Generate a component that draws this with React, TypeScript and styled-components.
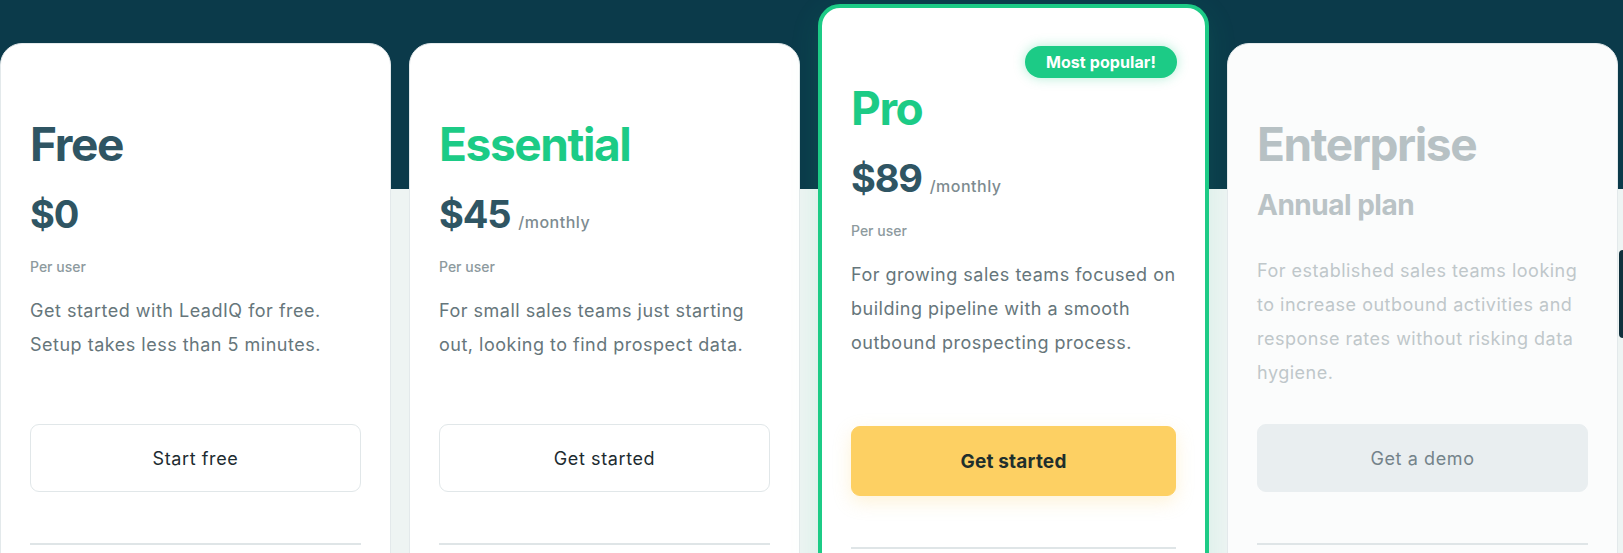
import styled, { createGlobalStyle } from "styled-components";

type Variant = "default" | "featured" | "muted";

interface IPlan {
  name: string;
  price?: string;
  period?: string;
  perUser?: boolean;
  subtitle?: string;
  description: string;
  cta: string;
  variant: Variant;
  accent?: boolean;
  badge?: string;
}

const plans: IPlan[] = [
  {
    name: "Free",
    price: "$0",
    perUser: true,
    description: "Get started with LeadIQ for free. Setup takes less than 5 minutes.",
    cta: "Start free",
    variant: "default",
  },
  {
    name: "Essential",
    price: "$45",
    period: "/monthly",
    perUser: true,
    description: "For small sales teams just starting out, looking to find prospect data.",
    cta: "Get started",
    variant: "default",
    accent: true,
  },
  {
    name: "Pro",
    price: "$89",
    period: "/monthly",
    perUser: true,
    description:
      "For growing sales teams focused on building pipeline with a smooth outbound prospecting process.",
    cta: "Get started",
    variant: "featured",
    accent: true,
    badge: "Most popular!",
  },
  {
    name: "Enterprise",
    subtitle: "Annual plan",
    description:
      "For established sales teams looking to increase outbound activities and response rates without risking data hygiene.",
    cta: "Get a demo",
    variant: "muted",
  },
];

const GREEN = "#1ccb86";
const NAVY = "#0b3a4a";
const SLATE = "#2f5563";

const GlobalStyle = createGlobalStyle`
  html, body {
    margin: 0;
    padding: 0;
    overflow: hidden;
  }
  body {
    font-family: Inter, "Liberation Sans", sans-serif;
    background: #eef4f3;
  }
`;

export default function App() {
  return (
    <>
      <GlobalStyle />
      <Page>
        <CardRow>
          {plans.map((plan) => (
            <PlanCard key={plan.name} plan={plan} />
          ))}
        </CardRow>
        <SideTab />
      </Page>
    </>
  );
}

const PlanCard = ({ plan }: { plan: IPlan }) => {
  const { variant } = plan;
  return (
    <Card $variant={variant}>
      {plan.badge ? <Badge>{plan.badge}</Badge> : null}
      <Header $variant={variant}>
        <Title $variant={variant} $accent={!!plan.accent}>
          {plan.name}
        </Title>

        {/* enterprise has no price, only a subtitle */}
        {plan.subtitle ? <Subtitle>{plan.subtitle}</Subtitle> : null}
        {plan.price ? (
          <PriceRow>
            <Price>{plan.price}</Price>
            {plan.period ? <Period>{plan.period}</Period> : null}
          </PriceRow>
        ) : null}
        {plan.perUser ? <PerUser>Per user</PerUser> : null}

        <Description $variant={variant} $spaced={!!plan.subtitle}>
          {plan.description}
        </Description>
      </Header>
      <CtaButton $variant={variant}>{plan.cta}</CtaButton>
      <Divider />
    </Card>
  );
};

const Page = styled.div`
  position: relative;
  height: 553px;
  overflow: hidden;
  box-sizing: border-box;
  padding-top: 4px;
  background: linear-gradient(${NAVY} 0 189px, #eef4f3 189px 100%);
`;

const CardRow = styled.div`
  display: flex;
  align-items: flex-start;
  gap: 18px;
`;

const Card = styled.div<{ $variant: Variant }>`
  flex: 0 0 391px;
  box-sizing: border-box;
  display: flex;
  flex-direction: column;
  border-radius: 22px;
  background: ${(p) => (p.$variant === "muted" ? "#fbfcfc" : "#fff")};
  border: ${(p) =>
    p.$variant === "featured" ? `4px solid ${GREEN}` : "1px solid #e3e9eb"};
  margin-top: ${(p) => (p.$variant === "featured" ? 0 : 39)}px;
  padding: ${(p) => (p.$variant === "featured" ? "38px 29px 80px" : "77px 29px 80px")};
  box-shadow: ${(p) =>
    p.$variant === "featured" ? "0 8px 30px rgba(28, 203, 134, 0.12)" : "none"};
`;

const Badge = styled.div`
  align-self: flex-end;
  height: 32px;
  padding: 0 21px;
  margin-right: -1px;
  margin-bottom: 7px;
  border-radius: 16px;
  display: flex;
  align-items: center;
  background: ${GREEN};
  color: #fff;
  font-size: 16px;
  font-weight: 700;
  letter-spacing: 0.1px;
  box-shadow: 0 0 12px rgba(28, 203, 134, 0.35);
`;

const Header = styled.div<{ $variant: Variant }>`
  display: flex;
  flex-direction: column;
  align-items: flex-start;
  height: ${(p) => (p.$variant === "featured" ? 341 : 303)}px;
`;

const Title = styled.h2<{ $variant: Variant; $accent: boolean }>`
  margin: 0;
  font-size: 46px;
  line-height: 46px;
  font-weight: 700;
  letter-spacing: -1.4px;
  color: ${(p) =>
    p.$variant === "muted" ? "#b7c1c4" : p.$accent ? GREEN : SLATE};
`;

const Subtitle = styled.div`
  margin-top: 24px;
  font-size: 28px;
  line-height: 28px;
  font-weight: 700;
  letter-spacing: -0.5px;
  color: #bac3c6;
`;

const PriceRow = styled.div`
  margin-top: 28px;
  display: flex;
  align-items: baseline;
`;

const Price = styled.span`
  font-size: 38px;
  line-height: 38px;
  font-weight: 700;
  letter-spacing: -1.2px;
  color: ${SLATE};
`;

const Period = styled.span`
  margin-left: 8px;
  font-size: 16px;
  font-weight: 500;
  letter-spacing: 0.5px;
  color: #7d8b90;
`;

const PerUser = styled.div`
  margin-top: 27px;
  font-size: 14px;
  line-height: 14px;
  font-weight: 500;
  color: #8d9a9e;
`;

const Description = styled.p<{ $variant: Variant; $spaced: boolean }>`
  margin: ${(p) => (p.$spaced ? 35 : 20)}px 0 0;
  font-size: 18px;
  line-height: 34px;
  letter-spacing: 0.5px;
  color: ${(p) => (p.$variant === "muted" ? "#bfc7ca" : "#66767b")};
`;

const CtaButton = styled.button<{ $variant: Variant }>`
  height: ${(p) => (p.$variant === "featured" ? 70 : 68)}px;
  width: 100%;
  border-radius: 9px;
  font-family: inherit;
  font-size: ${(p) => (p.$variant === "featured" ? 19 : 18)}px;
  font-weight: ${(p) => (p.$variant === "featured" ? 700 : 400)};
  letter-spacing: ${(p) => (p.$variant === "featured" ? 0.2 : 0.6)}px;
  cursor: pointer;
  border: 1px solid
    ${(p) =>
      p.$variant === "featured"
        ? "#fdd063"
        : p.$variant === "muted"
          ? "#e9eef0"
          : "#e1e7e9"};
  background: ${(p) =>
    p.$variant === "featured"
      ? "#fdd063"
      : p.$variant === "muted"
        ? "#e9eef0"
        : "#fff"};
  color: ${(p) =>
    p.$variant === "featured"
      ? "#1f2f2c"
      : p.$variant === "muted"
        ? "#74838a"
        : "#1d2b30"};
  box-shadow: ${(p) =>
    p.$variant === "featured" ? "0 6px 18px rgba(253, 208, 99, 0.25)" : "none"};
`;

const Divider = styled.hr`
  margin: 51px 0 0;
  border: 0;
  height: 2px;
  background: #dfe5e7;
`;

// the little dark tab stuck on the right edge of the window
const SideTab = styled.div`
  position: absolute;
  right: 0;
  top: 250px;
  width: 4px;
  height: 88px;
  border-radius: 4px 0 0 4px;
  background: #10303c;
`;
